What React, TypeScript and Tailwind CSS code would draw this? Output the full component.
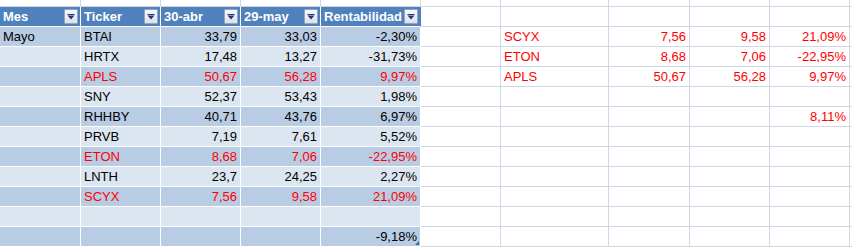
import React from 'react';

type Row = { cells: string[]; red?: boolean };

const tableRows: Row[] = [
  { cells: ['Mayo', 'BTAI', '33,79', '33,03', '-2,30%'] },
  { cells: ['', 'HRTX', '17,48', '13,27', '-31,73%'] },
  { cells: ['', 'APLS', '50,67', '56,28', '9,97%'], red: true },
  { cells: ['', 'SNY', '52,37', '53,43', '1,98%'] },
  { cells: ['', 'RHHBY', '40,71', '43,76', '6,97%'] },
  { cells: ['', 'PRVB', '7,19', '7,61', '5,52%'] },
  { cells: ['', 'ETON', '8,68', '7,06', '-22,95%'], red: true },
  { cells: ['', 'LNTH', '23,7', '24,25', '2,27%'] },
  { cells: ['', 'SCYX', '7,56', '9,58', '21,09%'], red: true },
  { cells: ['', '', '', '', ''] },
  { cells: ['', '', '', '', '-9,18%'] },
];

// loose cells to the right of the table, same body row index
const sideRows: string[][] = [
  ['', 'SCYX', '7,56', '9,58', '21,09%'],
  ['', 'ETON', '8,68', '7,06', '-22,95%'],
  ['', 'APLS', '50,67', '56,28', '9,97%'],
  ['', '', '', '', ''],
  ['', '', '', '', '8,11%'],
];

const headers = ['Mes', 'Ticker', '30-abr', '29-may', 'Rentabilidad'];

const FilterButton = () => (
  <span className="ml-auto mr-[2px] flex h-[15px] w-[14px] shrink-0 items-center justify-center rounded-[1px] border border-[#9aa6b8] bg-gradient-to-b from-[#f7f8fa] to-[#dde2ea]">
    <svg width="8" height="6" viewBox="0 0 8 6" aria-hidden>
      <rect x="0.5" y="0" width="7" height="1" fill="#1f3c78" />
      <polygon points="0.5,1.5 7.5,1.5 4,5.5" fill="#1f3c78" />
    </svg>
  </span>
);

const SheetCell = ({ text = '', left = false, red = false }: { text?: string; left?: boolean; red?: boolean }) => (
  <div
    className={`flex items-center overflow-hidden whitespace-nowrap border-r border-b border-[#d0d7e5] bg-white px-[3px] ${
      left ? 'justify-start' : 'justify-end'
    } ${red ? 'text-[#ff0000]' : 'text-black'}`}
  >
    {text}
  </div>
);

const Edge = () => <div className="border-b border-[#d0d7e5] bg-white" />;

export default function App() {
  return (
    <div className="h-[247px] w-[852px] overflow-hidden bg-white text-[13px] leading-[15px] text-black [font-family:'Liberation_Sans',Arial,sans-serif]">
      <div className="grid grid-cols-[81px_80px_80px_80px_100px_80px_108px_81px_80px_80px_2px] grid-rows-[7px_repeat(12,20px)]">
        {/* partial row above the table */}
        {Array.from({ length: 10 }).map((_, i) => (
          <SheetCell key={`top-${i}`} />
        ))}
        <Edge />

        {/* header */}
        {headers.map((h, i) => (
          <div
            key={h}
            className={`flex items-center border-b border-white bg-[#4f81bd] pl-[3px] font-bold text-white ${
              i === 4 ? 'border-r border-r-[#4f81bd]' : 'border-r'
            }`}
          >
            <span>{h}</span>
            <FilterButton />
          </div>
        ))}
        {Array.from({ length: 5 }).map((_, i) => (
          <SheetCell key={`hdr-side-${i}`} />
        ))}
        <Edge />

        {/* body */}
        {tableRows.map((row, r) => {
          const band = r % 2 === 0 ? 'bg-[#b8cce4]' : 'bg-[#dce6f1]';
          const color = row.red ? 'text-[#ff0000]' : 'text-black';
          const side = sideRows[r] ?? ['', '', '', '', ''];
          return (
            <React.Fragment key={`row-${r}`}>
              {row.cells.map((c, i) => (
                <div
                  key={i}
                  className={`relative flex items-center whitespace-nowrap border-r border-b border-white px-[3px] ${band} ${color} ${
                    i < 2 ? 'justify-start' : 'justify-end'
                  }`}
                >
                  {c}
                  {r === tableRows.length - 1 && i === 4 && (
                    <span className="absolute right-[1px] bottom-[1px] h-[4px] w-[4px] bg-[#3f5fa8] [clip-path:polygon(100%_0,100%_100%,0_100%)]" />
                  )}
                </div>
              ))}
              {side.map((c, i) => (
                <SheetCell key={`s-${i}`} text={c} left={i === 1} red={c !== ''} />
              ))}
              <Edge />
            </React.Fragment>
          );
        })}
      </div>
    </div>
  );
}
